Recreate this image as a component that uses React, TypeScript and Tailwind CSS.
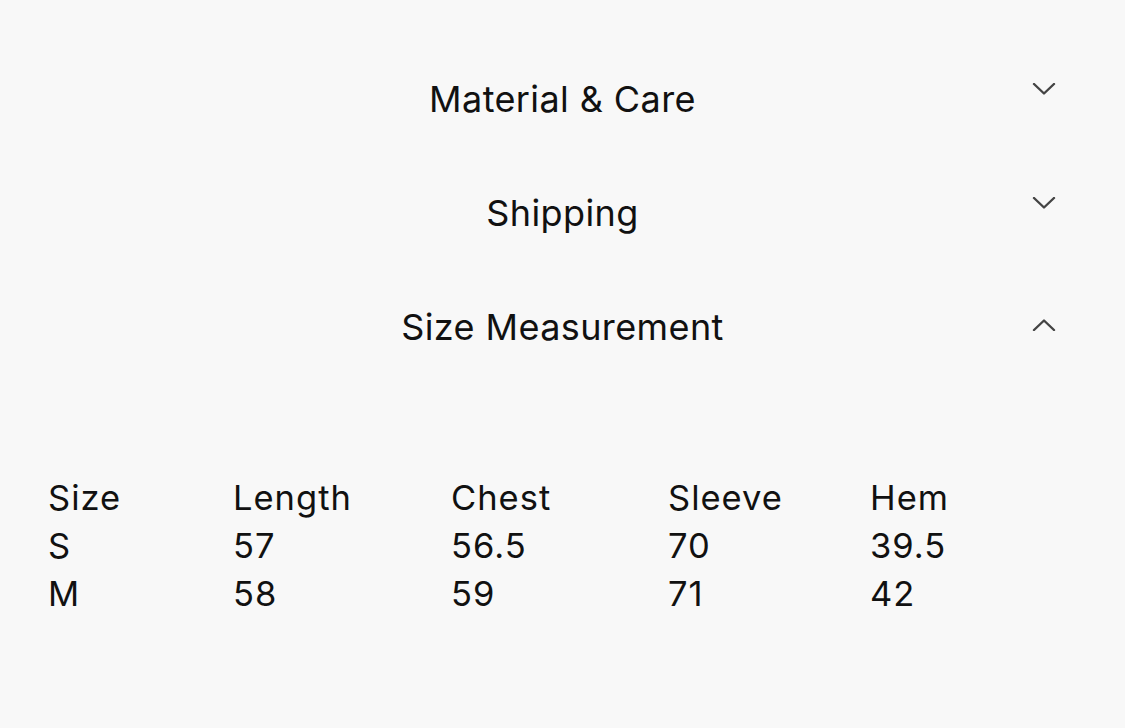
const sections = [
  { title: "Material & Care", open: false },
  { title: "Shipping", open: false },
  { title: "Size Measurement", open: true },
];

const rows = [
  ["Size", "Length", "Chest", "Sleeve", "Hem"],
  ["S", "57", "56.5", "70", "39.5"],
  ["M", "58", "59", "71", "42"],
];

function Chevron({ up }: { up: boolean }) {
  return (
    <svg width="24" height="12" viewBox="0 0 24 12" fill="none" className="text-[#444]">
      <path
        d={up ? "M2 11 L12 1.5 L22 11" : "M2 1 L12 10.5 L22 1"}
        stroke="currentColor"
        strokeWidth="2.4"
        strokeLinecap="round"
        strokeLinejoin="round"
      />
    </svg>
  );
}

export default function App() {
  return (
    <div className="min-h-[728px] w-[1125px] bg-[#f8f8f8] text-[#111] font-['Inter','Liberation_Sans',sans-serif]">
      <div className="pt-[42px]">
        {sections.map((s) => (
          <div key={s.title} className="grid h-[114px] grid-cols-[1fr_auto_1fr] items-center">
            <div />
            <h3 className="text-[36px] leading-none tracking-[0.4px]">{s.title}</h3>
            <div className={`justify-self-end pr-[69px] ${s.open ? "-mt-[4px]" : "-mt-[20px]"}`}>
              <Chevron up={s.open} />
            </div>
          </div>
        ))}
      </div>
      <div className="mt-[90px] pl-[48px] text-[34.5px] leading-[48px] tracking-[1px]">
        {rows.map((r, i) => (
          <div key={i} className="grid grid-cols-[185px_218px_217px_202px_1fr]">
            {r.map((c, j) => (
              <div key={j}>{c}</div>
            ))}
          </div>
        ))}
      </div>
    </div>
  );
}
